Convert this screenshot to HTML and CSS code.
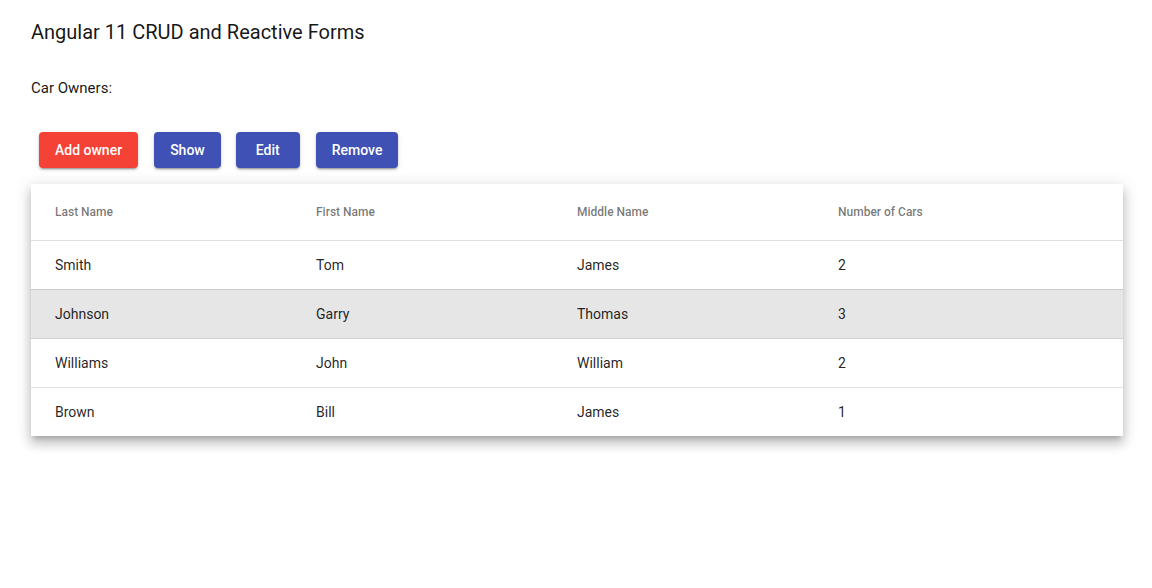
FILE: index.html
```html
<!DOCTYPE html>
<html>
<head>
<meta charset="utf-8">
<link rel="stylesheet" href="styles.css">
</head>
<body>
<div class="page">
  <h2 class="title">Angular 11 CRUD and Reactive Forms</h2>
  <p class="subtitle">Car Owners:</p>
  <div class="actions">
    <button class="btn btn-warn">Add owner</button>
    <button class="btn btn-primary">Show</button>
    <button class="btn btn-primary btn-edit">Edit</button>
    <button class="btn btn-primary">Remove</button>
  </div>
  <div class="card">
    <table class="table">
      <thead>
        <tr class="head-row">
          <th>Last Name</th><th>First Name</th><th>Middle Name</th><th>Number of Cars</th>
        </tr>
      </thead>
      <tbody>
        <tr class="row"><td>Smith</td><td>Tom</td><td>James</td><td>2</td></tr>
        <tr class="row selected"><td>Johnson</td><td>Garry</td><td>Thomas</td><td>3</td></tr>
        <tr class="row"><td>Williams</td><td>John</td><td>William</td><td>2</td></tr>
        <tr class="row last"><td>Brown</td><td>Bill</td><td>James</td><td>1</td></tr>
      </tbody>
    </table>
  </div>
</div>
</body>
</html>
```

FILE: styles.css
```css
* { box-sizing: border-box; }
html, body { height: 100%; }
body {
  margin: 0;
  font-family: Roboto, "Helvetica Neue", sans-serif;
  color: rgba(0,0,0,0.87);
  background: #fff;
}
.page {
  min-height: 100%;
  padding: 16px 29px 40px 31px;
}
.title {
  margin: 0;
  font-size: 20px;
  font-weight: 400;
  line-height: 32px;
  color: rgba(0,0,0,0.92);
}
.subtitle {
  margin: 30px 0 0;
  font-size: 15px;
  line-height: 20px;
  color: rgba(0,0,0,0.92);
}
.actions {
  display: flex;
  margin-top: 26px;
  padding: 8px 0;
}
.btn {
  margin: 0 8px;
  min-width: 64px;
  height: 36px;
  padding: 0 16px;
  border: none;
  border-radius: 4px;
  font-family: Roboto, "Helvetica Neue", sans-serif;
  font-size: 14px;
  font-weight: 500;
  color: #fff;
  box-shadow: 0 3px 1px -2px rgba(0,0,0,.2), 0 2px 2px 0 rgba(0,0,0,.14), 0 1px 5px 0 rgba(0,0,0,.12);
}
.btn-edit { margin-left: 7px; }
.btn-warn { background: #f44336; }
.btn-primary { background: #3f51b5; }
.card {
  margin-top: 8px;
  width: 1092px;
  background: #fff;
  box-shadow: 0 5px 5px -3px rgba(0,0,0,.2), 0 8px 10px 1px rgba(0,0,0,.14), 0 3px 14px 2px rgba(0,0,0,.12);
}
.table {
  width: 100%;
  border-collapse: collapse;
  border-spacing: 0;
  table-layout: fixed;
}
.table th, .table td {
  text-align: left;
  padding: 0;
  border-bottom: 1px solid rgba(0,0,0,0.12);
}
.table th:first-child, .table td:first-child { padding-left: 24px; width: 285px; }
.table th:last-child, .table td:last-child { padding-right: 24px; width: 285px; }
.head-row th {
  height: 56px;
  font-size: 12px;
  font-weight: 500;
  color: rgba(0,0,0,0.54);
}
.row td {
  height: 49px;
  font-size: 14px;
}
.row.selected { background: #e6e6e6; }
.row.selected td { border-bottom-color: #cfcfcf; }
.row.last td { border-bottom: none; }
```
